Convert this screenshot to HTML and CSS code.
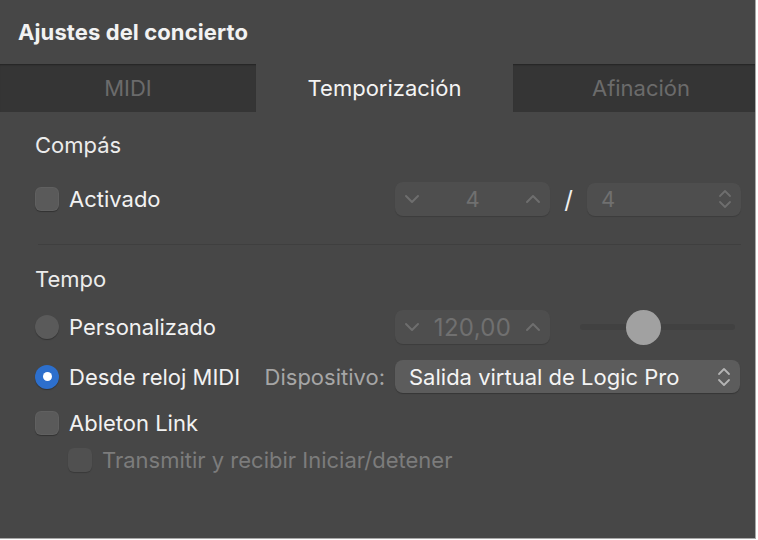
FILE: index.html
```html
<!DOCTYPE html>
<html lang="es">
<head>
<meta charset="utf-8">
<title>Ajustes del concierto</title>
<link rel="stylesheet" href="styles.css">
</head>
<body>
<div class="panel">
  <header class="header"><h1 class="title">Ajustes del concierto</h1></header>
  <nav class="tabs">
    <div class="tab">MIDI</div>
    <div class="tab tab-active">Temporización</div>
    <div class="tab tab-last">Afinación</div>
  </nav>
  <main class="content">
    <div class="section-title first">Compás</div>
    <div class="row row-activado">
      <div class="label"><span class="check"></span><span class="text">Activado</span></div>
      <div class="controls">
        <div class="stepper">
          <svg class="chev" width="16" height="10" viewBox="0 0 16 10"><path d="M2 2l6 6 6-6" fill="none" stroke="#6e6e6e" stroke-width="2" stroke-linecap="round" stroke-linejoin="round"/></svg>
          <span class="val">4</span>
          <svg class="chev" width="16" height="10" viewBox="0 0 16 10"><path d="M2 8l6-6 6 6" fill="none" stroke="#6e6e6e" stroke-width="2" stroke-linecap="round" stroke-linejoin="round"/></svg>
        </div>
        <span class="slash">/</span>
        <div class="select">
          <span class="val">4</span>
          <svg class="updown" width="14" height="22" viewBox="0 0 14 22"><path d="M2 8l5-5 5 5M2 14l5 5 5-5" fill="none" stroke="#6e6e6e" stroke-width="1.8" stroke-linecap="round" stroke-linejoin="round"/></svg>
        </div>
      </div>
    </div>
    <hr class="sep">
    <div class="section-title">Tempo</div>
    <div class="row row-personal">
      <div class="label"><span class="radio"></span><span class="text">Personalizado</span></div>
      <div class="controls">
        <div class="stepper">
          <svg class="chev" width="16" height="10" viewBox="0 0 16 10"><path d="M2 2l6 6 6-6" fill="none" stroke="#6e6e6e" stroke-width="2" stroke-linecap="round" stroke-linejoin="round"/></svg>
          <span class="val val-tempo">120,00</span>
          <svg class="chev" width="16" height="10" viewBox="0 0 16 10"><path d="M2 8l6-6 6 6" fill="none" stroke="#6e6e6e" stroke-width="2" stroke-linecap="round" stroke-linejoin="round"/></svg>
        </div>
        <div class="slider"><span class="track"></span><span class="knob"></span></div>
      </div>
    </div>
    <div class="row row-midi">
      <div class="label"><span class="radio radio-on"></span><span class="text">Desde reloj MIDI</span><span class="device">Dispositivo:</span></div>
      <div class="controls">
        <div class="popup">
          <span class="popup-text">Salida virtual de Logic Pro</span>
          <svg class="updown" width="14" height="22" viewBox="0 0 14 22"><path d="M2 8l5-5 5 5M2 14l5 5 5-5" fill="none" stroke="#b4b4b4" stroke-width="1.8" stroke-linecap="round" stroke-linejoin="round"/></svg>
        </div>
      </div>
    </div>
    <div class="row row-ableton">
      <div class="label"><span class="check"></span><span class="text">Ableton Link</span></div>
    </div>
    <div class="row row-transmit">
      <div class="label"><span class="check check-disabled"></span><span class="text text-disabled">Transmitir y recibir Iniciar/detener</span></div>
    </div>
  </main>
</div>
</body>
</html>
```

FILE: styles.css
```css
* { box-sizing: border-box; }
html, body { margin: 0; padding: 0; background: #ffffff; }
body { font-family: Inter, "Liberation Sans", sans-serif; -webkit-font-smoothing: antialiased; }

.panel {
  width: 756px;
  height: 539px;
  background: #474747;
  border-right: 1px solid #a8a8a8;
  border-bottom: 1px solid #a8a8a8;
  display: flex;
  flex-direction: column;
}

.header {
  height: 64px;
  display: flex;
  align-items: center;
  padding-left: 18px;
}
.title {
  margin: 0;
  font-size: 22px;
  font-weight: 700;
  color: #f2f2f2;
  letter-spacing: 0.1px;
}

.tabs {
  height: 48px;
  display: grid;
  grid-template-columns: 256px 257px 1fr;
}
.tab {
  display: flex;
  align-items: center;
  justify-content: center;
  background: #353535;
  color: #6b6b6b;
  font-size: 22px;
  box-shadow: inset 0 2px 2px -1px rgba(0,0,0,0.35);
}
.tab-last { padding-left: 14px; }
.tab-active {
  background: #474747;
  color: #f4f4f4;
  box-shadow: none;
}

.content {
  padding: 0 14px 0 35px;
}

.section-title {
  height: 24px;
  line-height: 24px;
  font-size: 22px;
  color: #ececec;
  margin-top: 22px;
}
.section-title.first { margin-top: 21px; }

.row {
  display: flex;
  align-items: center;
}
.label {
  flex: 1;
  display: flex;
  align-items: center;
}
.text {
  font-size: 22px;
  color: #f2f2f2;
  margin-left: 10px;
}
.text-disabled { color: #7c7c7c; }
.device {
  margin-left: auto;
  margin-right: 10px;
  font-size: 22px;
  color: #a6a6a6;
}
.controls {
  width: 346px;
  display: flex;
  align-items: center;
}

.check {
  width: 24px;
  height: 24px;
  border-radius: 6px;
  background: #5a5a5a;
  box-shadow: inset 0 0 0 1px rgba(255,255,255,0.04), 0 1px 1px rgba(0,0,0,0.3);
  flex: none;
}
.check-disabled {
  background: #505050;
  margin-left: 33px;
  box-shadow: 0 1px 1px rgba(0,0,0,0.2);
}
.radio {
  width: 24px;
  height: 24px;
  border-radius: 50%;
  background: #5a5a5a;
  box-shadow: 0 1px 1px rgba(0,0,0,0.3);
  flex: none;
  display: flex;
  align-items: center;
  justify-content: center;
}
.radio-on {
  background: #2d6fcc;
}
.radio-on::after {
  content: "";
  width: 9px;
  height: 9px;
  border-radius: 50%;
  background: #ffffff;
}

.row-activado { margin-top: 25px; height: 34px; }
.row-personal { margin-top: 19px; height: 34px; }
.row-midi { margin-top: 16px; height: 33px; }
.row-ableton { margin-top: 14px; height: 32px; }
.row-transmit { margin-top: 5px; height: 32px; }

.stepper {
  width: 155px;
  height: 34px;
  border-radius: 8px;
  background: #4e4e4e;
  box-shadow: 0 1px 1px rgba(0,0,0,0.15);
  display: flex;
  align-items: center;
  justify-content: space-between;
  padding: 0 9px 0 9px;
}
.val {
  font-size: 22px;
  color: #707070;
}
.val-tempo { font-size: 24px; letter-spacing: 0.3px; }
.slash {
  width: 37px;
  text-align: center;
  font-size: 24px;
  color: #f0f0f0;
}
.select {
  width: 154px;
  height: 33px;
  border-radius: 8px;
  background: #4e4e4e;
  box-shadow: 0 1px 1px rgba(0,0,0,0.15);
  display: flex;
  align-items: center;
  justify-content: space-between;
  padding: 0 9px 0 14px;
}

.sep {
  border: none;
  height: 1px;
  background: #3f3f3f;
  margin: 28px 0 0 3px;
}

.slider {
  position: relative;
  margin-left: 30px;
  width: 155px;
  height: 36px;
  display: flex;
  align-items: center;
}
.track {
  width: 100%;
  height: 6px;
  border-radius: 3px;
  background: #414141;
}
.knob {
  position: absolute;
  left: 46px;
  top: 1px;
  width: 35px;
  height: 35px;
  border-radius: 50%;
  background: #a1a1a1;
}

.popup {
  width: 345px;
  height: 33px;
  border-radius: 8px;
  background: #5c5c5c;
  box-shadow: 0 1px 1px rgba(0,0,0,0.25);
  display: flex;
  align-items: center;
  justify-content: space-between;
  padding: 0 9px 0 14px;
}
.popup-text {
  font-size: 22px;
  color: #f4f4f4;
}
```
